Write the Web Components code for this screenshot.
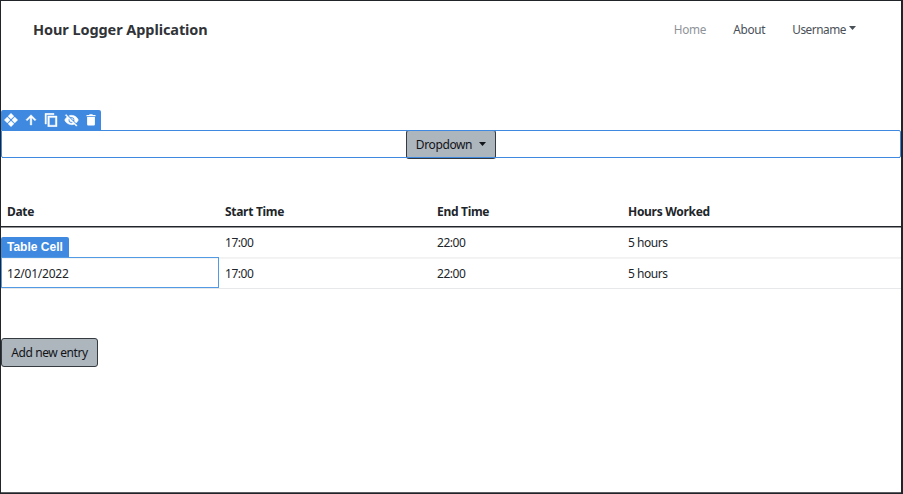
<!DOCTYPE html>
<html lang="en">
<head>
<meta charset="utf-8">
<title>Hour Logger Application</title>
<style>
html,body{margin:0;height:100%;overflow:hidden;background:#fff}
body{font-family:"Noto Sans","Open Sans",sans-serif;font-size:12px;color:#212529}
</style>
</head>
<body>
<hour-app></hour-app>
<script>
function define(name, html) {
  const t = document.createElement('template');
  t.innerHTML = html;
  customElements.define(name, class extends HTMLElement {
    constructor() {
      super();
      this.attachShadow({mode: 'open'}).append(t.content.cloneNode(true));
    }
  });
}

define('caret-down', `<style>:host{display:block;width:7px;height:4px}svg{display:block}</style>
<svg width="7" height="4" viewBox="0 0 7 4"><path d="M0 0H7L3.5 4Z" fill="currentColor"/></svg>`);

define('nav-link', `<style>
:host{display:flex;color:#495057;line-height:18px;white-space:nowrap;font-size:11.8px;letter-spacing:-.3px}
:host([active]){color:#8e9398}
</style><slot></slot>`);

define('nav-bar', `<style>
:host{display:flex;align-items:center;justify-content:space-between;height:56px;padding:0 45px 0 32px;box-sizing:border-box}
.brand{font-weight:700;font-size:14.5px;line-height:20px;color:#303338;white-space:nowrap;letter-spacing:-.08px}
nav{display:flex;gap:27px}
nav-link:last-child{letter-spacing:-.45px}
caret-down{margin:6px 0 0 3px}
</style>
<div class="brand">Hour Logger Application</div>
<nav><nav-link active>Home</nav-link><nav-link>About</nav-link><nav-link>Username<caret-down></caret-down></nav-link></nav>`);

define('app-button', `<style>
:host{display:flex;box-sizing:border-box;height:29px;border:1px solid #343a40;border-radius:3px;background:#adb5bd;color:#111418;align-items:center;justify-content:center;white-space:nowrap;line-height:18px;letter-spacing:-.38px}
</style><slot></slot>`);

define('tool-strip', `<style>
:host{display:grid;grid-template-columns:repeat(5,20px);width:100px;height:20px;background:#3f8ae0;border-radius:2px 2px 0 0;place-items:center}
svg{display:block;fill:#fff;stroke:#fff;stroke-width:.4}
</style>
<svg width="14" height="14" viewBox="0 0 14 14"><path d="M7 .3 10 3.3 7 6.1 4 3.3ZM7 7.9 10 10.7 7 13.7 4 10.7ZM3.3 4 6.1 7 3.3 10 .3 7ZM10.7 4 13.7 7 10.7 10 7.9 7Z"/></svg>
<svg width="12" height="12" viewBox="0 0 12 12"><path d="M5.2 11V3.7L2.1 6.8 1 5.7 6 .7l5 5-1.1 1.1-3.1-3.1V11Z"/></svg>
<svg width="14" height="14" viewBox="0 0 14 14"><path d="M1 .3h9v1.5H2.4V11H1ZM3.8 3H13V13.8H3.8ZM5.4 4.6v7.6h6V4.6Z" fill-rule="evenodd"/></svg>
<svg width="15" height="14" viewBox="0 1 24 22"><path stroke-width=".7" d="M12 7c2.76 0 5 2.24 5 5 0 .65-.13 1.26-.36 1.83l2.92 2.92c1.51-1.26 2.7-2.89 3.43-4.75-1.73-4.39-6-7.5-11-7.5-1.4 0-2.74.25-3.98.7l2.16 2.16C10.74 7.13 11.35 7 12 7zM2 4.27l2.28 2.28.46.46C3.08 8.3 1.78 10.02 1 12c1.73 4.39 6 7.5 11 7.5 1.55 0 3.03-.3 4.38-.84l.42.42L19.73 22 21 20.73 3.27 3 2 4.27zM7.53 9.8l1.55 1.55c-.05.21-.08.43-.08.65 0 1.66 1.34 3 3 3 .22 0 .44-.03.65-.08l1.55 1.55c-.67.33-1.41.53-2.2.53-2.76 0-5-2.24-5-5 0-.79.2-1.53.53-2.2zm4.31-.78l3.15 3.15.02-.16c0-1.66-1.34-3-3-3l-.17.01z"/></svg>
<svg width="10" height="12" viewBox="0 0 10 12" style="stroke:none"><path d="M.5 1H3L3.7.3H6.3L7 1H9.5V2.2H.5ZM1.1 3H8.9V10.5Q8.9 11.5 7.9 11.5H2.1Q1.1 11.5 1.1 10.5Z"/></svg>`);

define('selected-row', `<style>
:host{display:block}
.box{display:flex;justify-content:center;box-sizing:border-box;height:28px;border:1px solid #3f8ae0;border-radius:0 2px 2px 2px;position:relative}
app-button{width:90px;height:29px;margin-top:-1px;border-top-color:#3f8ae0}
caret-down{margin:-2px 0 0 7px}
.box::after{content:"";position:absolute;left:0;right:0;bottom:-1px;height:1px;background:#3f8ae0}
</style>
<tool-strip></tool-strip>
<div class="box"><app-button>Dropdown<caret-down></caret-down></app-button></div>`);

define('table-cell', `<style>
:host{display:block;box-sizing:border-box;padding:7px 6px 0;line-height:18px;white-space:nowrap;position:relative;letter-spacing:-.45px}
:host([head]){font-weight:700;letter-spacing:-.3px}
:host([selected]){letter-spacing:-.22px}
:host([selected])::before{content:"";position:absolute;left:0;right:0;top:-1px;height:29px;border:1px solid #529ae4}
.tag{display:none}
:host([selected]) .tag{display:block;position:absolute;left:0;top:-21px;width:68px;height:20px;box-sizing:border-box;padding-left:6px;background:#3f8ae0;color:#fff;font:700 12px/20px "Liberation Sans",sans-serif;border-radius:2px 2px 0 0;letter-spacing:0}
</style><span class="tag">Table Cell</span><slot></slot>`);

define('table-row', `<style>
:host{display:grid;grid-template-columns:218px 212px 191px 1fr;height:31px;box-sizing:border-box;border-bottom:1px solid #e7e8ea}
:host([soft]){border-color:#f2f2f3;box-shadow:0 1px #f4f4f5}
:host([head]){border-bottom:1px solid #212529;box-shadow:0 1px #929496}
</style><slot></slot>`);

define('hours-table', `<style>:host{display:block}</style>
<table-row head><table-cell head>Date</table-cell><table-cell head>Start Time</table-cell><table-cell head>End Time</table-cell><table-cell head>Hours Worked</table-cell></table-row>
<table-row soft><table-cell></table-cell><table-cell>17:00</table-cell><table-cell>22:00</table-cell><table-cell>5 hours</table-cell></table-row>
<table-row><table-cell selected>12/01/2022</table-cell><table-cell>17:00</table-cell><table-cell>22:00</table-cell><table-cell>5 hours</table-cell></table-row>`);

define('hour-app', `<style>
:host{display:block;box-sizing:border-box;width:903px;height:494px;border:solid #212529;border-width:1px 2px 1px 1px;background:#fff;box-shadow:inset 0 -1px #5c5e62}
selected-row{margin-top:53px}
hours-table{margin-top:38px}
.add{width:97px;margin-top:49px}
</style>
<nav-bar></nav-bar>
<selected-row></selected-row>
<hours-table></hours-table>
<app-button class="add">Add new entry</app-button>`);
</script>
</body>
</html>
